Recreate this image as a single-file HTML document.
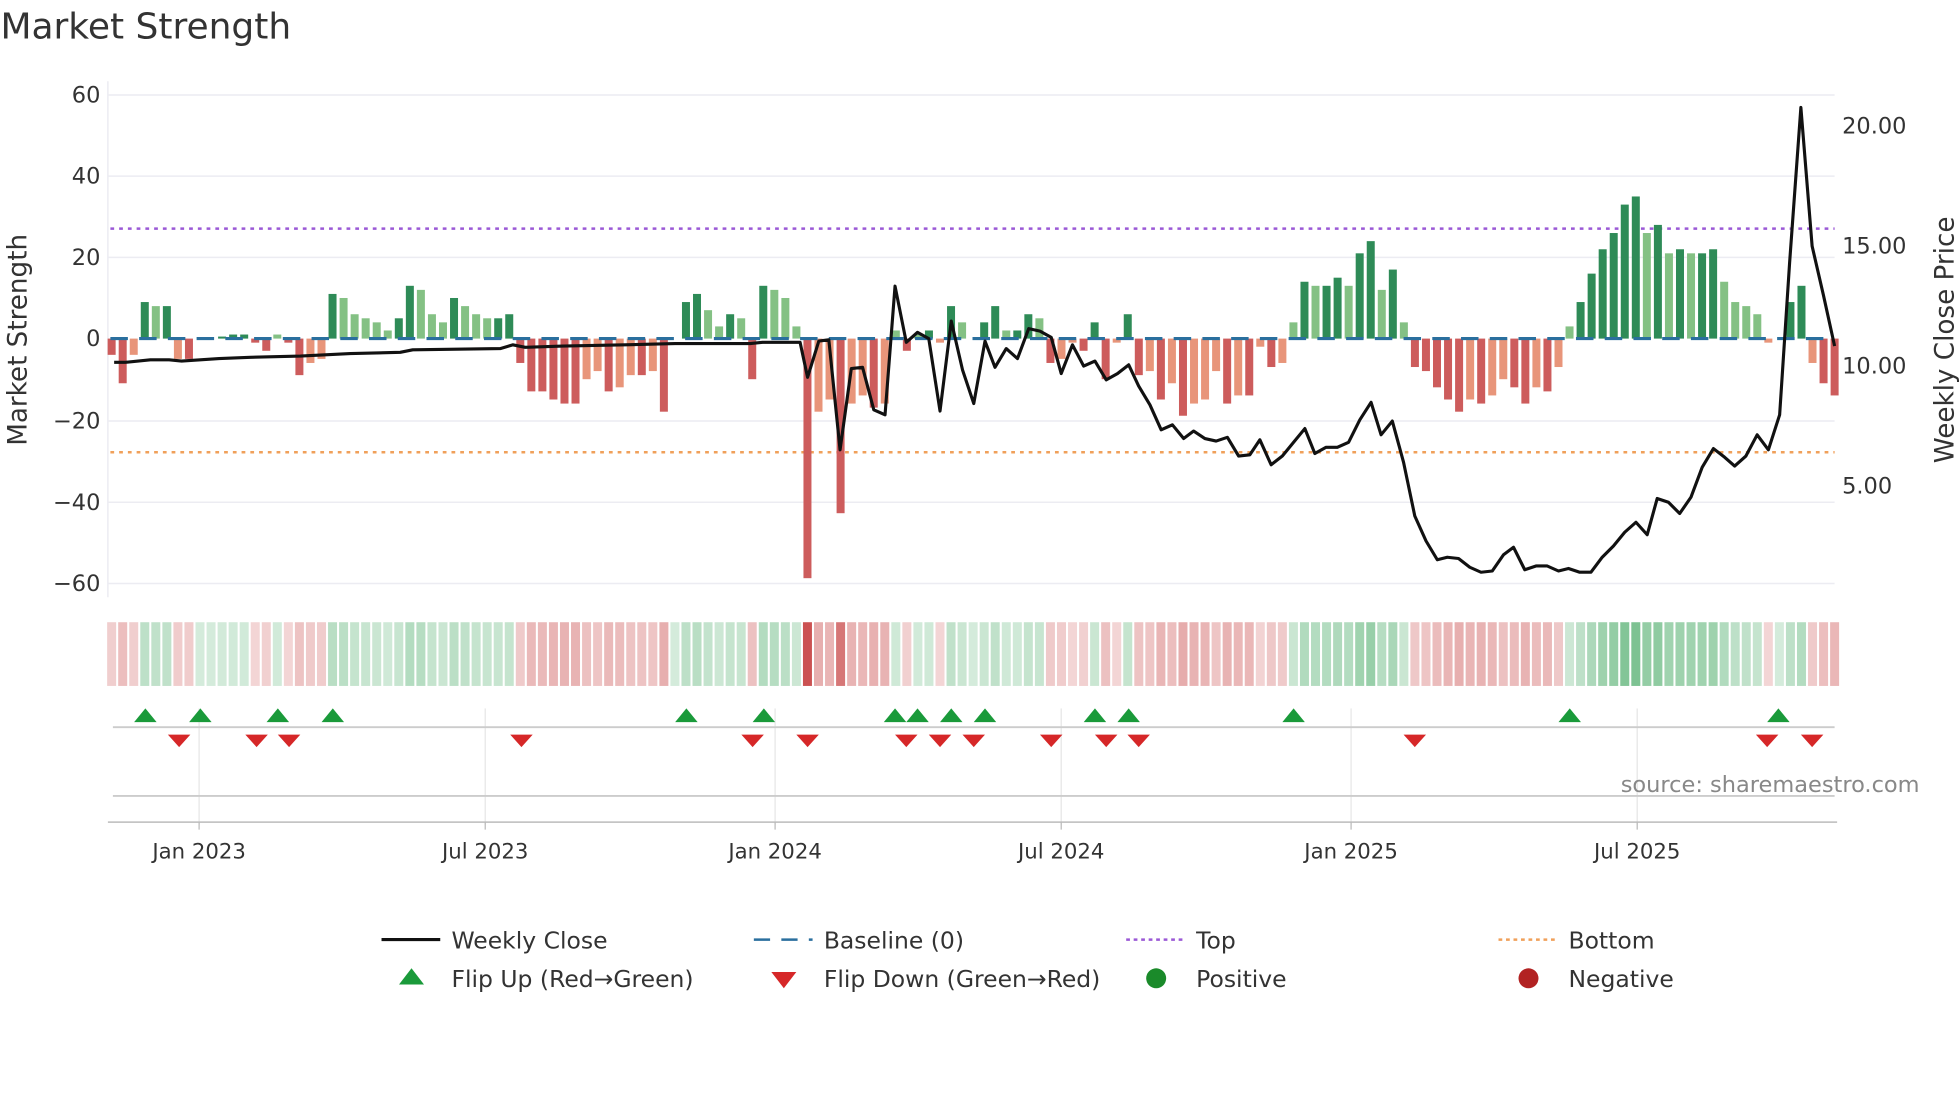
<!DOCTYPE html>
<html><head><meta charset="utf-8"><style>
html,body{margin:0;padding:0;background:#fff;width:1960px;height:1102px;overflow:hidden}
svg{display:block;font-family:"DejaVu Sans","Liberation Sans",sans-serif}
</style></head><body>
<svg id="s" width="1960" height="1102" viewBox="0 0 1568 882" xmlns="http://www.w3.org/2000/svg">
<rect width="1568" height="882" fill="#fff"/>
<text x="0" y="31" font-size="28.8" fill="#333">Market Strength</text>
<g stroke="#ececf2" stroke-width="1.2">
<line x1="86" x2="1468" y1="76" y2="76"/><line x1="86" x2="1468" y1="141" y2="141"/>
<line x1="86" x2="1468" y1="206" y2="206"/><line x1="86" x2="1468" y1="337" y2="337"/>
<line x1="86" x2="1468" y1="402" y2="402"/><line x1="86" x2="1468" y1="467" y2="467"/>
<line x1="86" x2="86" y1="65" y2="478"/>
</g>
<g font-size="18" fill="#333" text-anchor="end">
<text x="80" y="82">60</text><text x="80" y="147">40</text><text x="80" y="212">20</text>
<text x="80" y="277">0</text><text x="80" y="343">−20</text><text x="80" y="408">−40</text><text x="80" y="473">−60</text>
</g>
<g font-size="18" fill="#333">
<text x="1474" y="107">20.00</text><text x="1474" y="203">15.00</text><text x="1474" y="299">10.00</text><text x="1474" y="395">5.00</text>
</g>
<text transform="translate(21,272) rotate(-90)" font-size="21" fill="#333" text-anchor="middle">Market Strength</text>
<text transform="translate(1563,272) rotate(-90)" font-size="21" fill="#333" text-anchor="middle">Weekly Close Price</text>
<line x1="88" x2="1468" y1="183" y2="183" stroke="#9b59d6" stroke-width="2" stroke-dasharray="3,4"/>
<line x1="88" x2="1468" y1="362" y2="362" stroke="#f0a05a" stroke-width="2" stroke-dasharray="3,4"/>
<g id="bars"></g>
<line x1="88" x2="1468" y1="271" y2="271" stroke="#2a6f9e" stroke-width="2.5" stroke-dasharray="14,9"/>
<polyline id="price" fill="none" stroke="#111" stroke-width="2.5" stroke-linejoin="round"/>
<g id="strip"></g>
<g stroke="#e6e6e6" stroke-width="1">
<line x1="159" x2="159" y1="567" y2="660"/><line x1="388" x2="388" y1="567" y2="660"/><line x1="620" x2="620" y1="567" y2="660"/>
<line x1="849" x2="849" y1="567" y2="660"/><line x1="1081" x2="1081" y1="567" y2="660"/><line x1="1310" x2="1310" y1="567" y2="660"/>
</g>
<line x1="90" x2="1468" y1="582" y2="582" stroke="#ccc" stroke-width="1.5"/>
<line x1="90" x2="1468" y1="637" y2="637" stroke="#ccc" stroke-width="1.5"/>
<line x1="86" x2="1470" y1="658" y2="658" stroke="#bbb" stroke-width="1.2"/>
<g id="marks"></g>
<text x="1536" y="634" font-size="18" fill="#888" text-anchor="end">source: sharemaestro.com</text>
<g font-size="17" fill="#333" text-anchor="middle">
<text x="159" y="687">Jan 2023</text><text x="388" y="687">Jul 2023</text><text x="620" y="687">Jan 2024</text>
<text x="849" y="687">Jul 2024</text><text x="1081" y="687">Jan 2025</text><text x="1310" y="687">Jul 2025</text>
</g>
<g stroke="#bbb"><line x1="159" x2="159" y1="658" y2="664"/><line x1="388" x2="388" y1="658" y2="664"/><line x1="620" x2="620" y1="658" y2="664"/><line x1="849" x2="849" y1="658" y2="664"/><line x1="1081" x2="1081" y1="658" y2="664"/><line x1="1310" x2="1310" y1="658" y2="664"/></g>
<g font-size="18.8" fill="#333">
<line x1="305" x2="352" y1="752" y2="752" stroke="#111" stroke-width="2.5"/><text x="361" y="759">Weekly Close</text>
<line x1="603" x2="650" y1="752" y2="752" stroke="#2a6f9e" stroke-width="2" stroke-dasharray="13,9"/><text x="659" y="759">Baseline (0)</text>
<line x1="901" x2="948" y1="752" y2="752" stroke="#9b59d6" stroke-width="2" stroke-dasharray="3,3"/><text x="957" y="759">Top</text>
<line x1="1199" x2="1246" y1="752" y2="752" stroke="#f0a05a" stroke-width="2" stroke-dasharray="3,3"/><text x="1255" y="759">Bottom</text>
<polygon points="319,788 339,788 329,775" fill="#1a9a3a"/><text x="361" y="790">Flip Up (Red→Green)</text>
<polygon points="617,778 637,778 627,791" fill="#d62728"/><text x="659" y="790">Flip Down (Green→Red)</text>
<circle cx="925" cy="783" r="8" fill="#1a8a2a"/><text x="957" y="790">Positive</text>
<circle cx="1223" cy="783" r="8" fill="#b22222"/><text x="1255" y="790">Negative</text>
</g>
</svg>
<script>
var v=[-4,-11,-4,9,8,8,-5,-5,0,0,0.5,1,1,-1,-3,1,-1,-9,-6,-5,11,10,6,5,4,2,5,13,12,6,4,10,8,6,5,5,6,-6,-13,-13,-15,-16,-16,-10,-8,-13,-12,-9,-9,-8,-18,0,9,11,7,3,6,5,-10,13,12,10,3,-59,-18,-15,-43,-16,-14,-17,-16,2,-3,1,2,-1,8,4,0,4,8,2,2,6,5,-6,-5,-1,-3,4,-10,-1,6,-9,-8,-15,-11,-19,-16,-15,-8,-16,-14,-14,-2,-7,-6,4,14,13,13,15,13,21,24,12,17,4,-7,-8,-12,-15,-18,-15,-16,-14,-10,-12,-16,-12,-13,-7,3,9,16,22,26,33,35,26,28,21,22,21,21,22,14,9,8,6,-1,0,9,13,-6,-11,-14];
var n=v.length,x0=89,x1=1468,dx=(x1-x0)/(n-1),NS="http://www.w3.org/2000/svg";
function el(t,a,p){var e=document.createElementNS(NS,t);for(var k in a)e.setAttribute(k,a[k]);document.getElementById(p).appendChild(e);}
for(var i=0;i<n;i++){var x=x0+i*dx,val=v[i],h=Math.abs(val)*3.25,prev=i?Math.abs(v[i-1]):0;
var dark=Math.abs(val)>=prev;var c=val>=0?(dark?"#2e8b57":"#84c184"):(dark?"#cd5c5c":"#e8957a");
if(h>0.5)el("rect",{x:x-3.2,y:val>=0?271-h:271,width:6.4,height:h,fill:c},"bars");
var o=0.22+Math.min(Math.abs(val),60)/60*0.75;el("rect",{x:x-3.6,y:498,width:7.2,height:51,fill:val>=0?"#3aa35a":"#c94a4a","fill-opacity":o},"strip");}
var p="91,290 100,290 120,288 135,288 145,289 160,288 175,287 200,286 240,285 280,283 320,282 330,280 400,279 410,276 420,278 450,277 500,276 540,275 600,275 610,274 640,274 646,302 655,273 663,272 672,360 681,295 690,294 699,328 708,332 716,229 725,274 734,266 743,271 752,329 761,257 770,296 779,323 788,273 796,294 805,279 814,287 823,263 832,265 841,270 849,299 858,276 867,293 876,289 885,304 894,299 903,292 911,309 920,324 929,344 938,340 947,351 955,345 964,351 973,353 982,350 991,365 1000,364 1008,352 1017,372 1026,365 1035,354 1044,343 1052,363 1061,358 1070,358 1079,354 1088,336 1097,322 1105,348 1114,337 1123,370 1132,413 1141,433 1150,448 1158,446 1167,447 1176,454 1185,458 1194,457 1203,444 1211,438 1220,456 1229,453 1238,453 1247,457 1255,455 1264,458 1273,458 1282,446 1291,437 1300,426 1309,418 1318,428 1326,399 1335,402 1344,411 1353,398 1362,374 1371,359 1380,366 1388,373 1397,365 1406,348 1415,360 1424,332 1432,210 1441,86 1450,197 1459,236 1468,277";
document.getElementById("price").setAttribute("points",p);
[116,160,222,266,549,611,716,734,761,788,876,903,1035,1256,1423].forEach(function(x){el("polygon",{points:(x-9)+",578 "+(x+9)+",578 "+x+",567",fill:"#1a9a3a"},"marks");});
[143,205,231,417,602,646,725,752,779,841,885,911,1132,1414,1450].forEach(function(x){el("polygon",{points:(x-9)+",588 "+(x+9)+",588 "+x+",598",fill:"#d62728"},"marks");});
</script>
</body></html>
